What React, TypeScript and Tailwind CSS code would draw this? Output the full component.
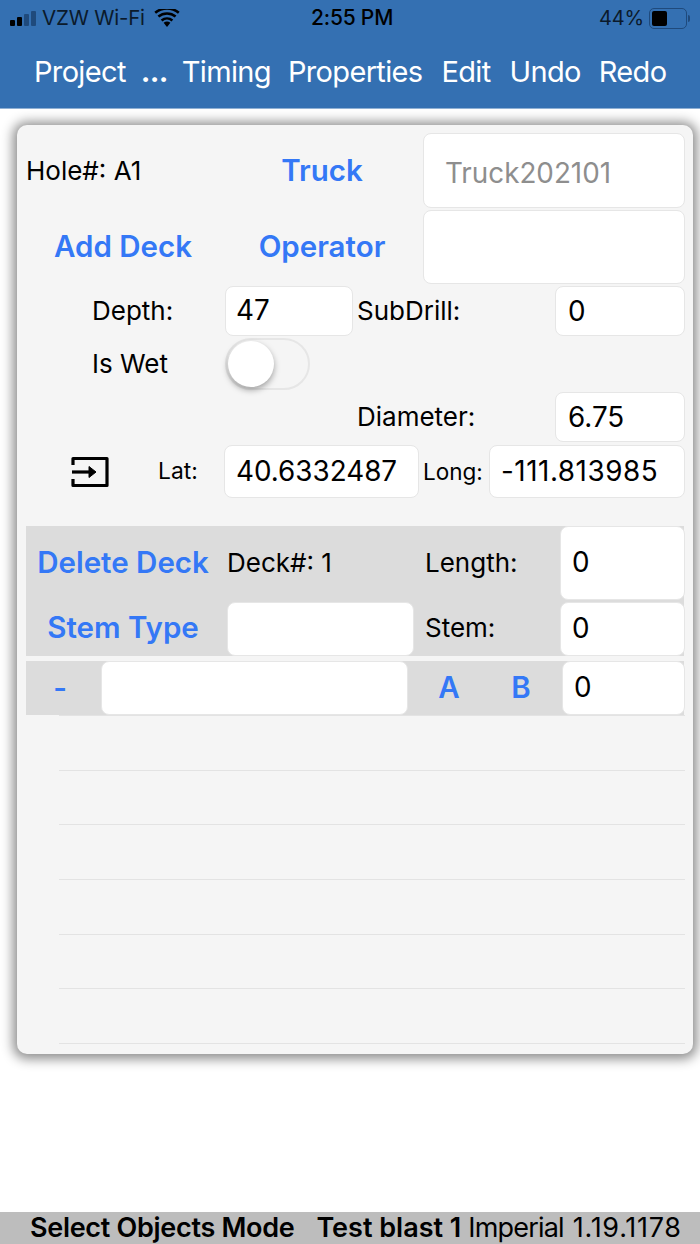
const font = "font-['Inter','Noto_Sans',sans-serif]";

function Field({ value, className, muted }: { value?: string; className: string; muted?: boolean }) {
  return (
    <div
      className={`flex items-center shrink-0 bg-white rounded-[8px] border border-[#e6e6e6] text-[27.8px] ${
        muted ? "text-[#8e8e8e]" : "text-black"
      } ${className}`}
    >
      {value}
    </div>
  );
}

function BlueLabel({ children, className }: { children: string; className: string }) {
  return (
    <div className={`font-semibold text-[#3478f6] text-[29.5px] text-center whitespace-nowrap shrink-0 ${className}`}>
      {children}
    </div>
  );
}

function StatusBar() {
  return (
    <div className="h-[36px] flex items-center text-[20px] tracking-[-0.2px] text-[#0b1a2b] relative">
      <div className="flex items-end gap-[2px] ml-[10px] h-[15px]">
        <span className="w-[5px] h-[6px] rounded-[1px] bg-black" />
        <span className="w-[5px] h-[9px] rounded-[1px] bg-black" />
        <span className="w-[5px] h-[12px] rounded-[1px] bg-[#1f4a7c]" />
        <span className="w-[5px] h-[15px] rounded-[1px] bg-[#1f4a7c]" />
      </div>
      <span className="ml-[6px] text-[20.5px]">VZW Wi-Fi</span>
      <svg width="26" height="19" viewBox="0 0 26 19" className="ml-[9px]">
        <path d="M13 18l-3.4-4.2a5.4 5.4 0 0 1 6.8 0z" fill="#000" />
        <path d="M7.6 11.4a8.6 8.6 0 0 1 10.8 0" stroke="#000" strokeWidth="2.6" fill="none" />
        <path d="M4.4 7.6a13.4 13.4 0 0 1 17.2 0" stroke="#000" strokeWidth="2.6" fill="none" />
        <path d="M1.2 3.8a18.4 18.4 0 0 1 23.6 0" stroke="#000" strokeWidth="2.6" fill="none" />
      </svg>
      <span className="absolute left-[311px] text-[21px] font-medium text-black">2:55 PM</span>
      <span className="ml-auto">44%</span>
      <div className="ml-[5px] mr-[13px] w-[38px] h-[21px] border border-[#1f4a7c] rounded-[5px] p-[2px] relative">
        <div className="w-[15px] h-full bg-black rounded-[2px]" />
        <span className="absolute -right-[4px] top-[6px] w-[2px] h-[7px] bg-[#1f4a7c] rounded-r-[2px]" />
      </div>
    </div>
  );
}

function NavBar() {
  const items: [string, string][] = [
    ["Project", "ml-[34px]"],
    ["...", "ml-[15px] font-bold"],
    ["Timing", "ml-[14px]"],
    ["Properties", "ml-[17px]"],
    ["Edit", "ml-[19px]"],
    ["Undo", "ml-[19px]"],
    ["Redo", "ml-[18px]"],
  ];
  return (
    <div className="h-[72px] flex items-start pt-[18px] text-white text-[29px] leading-[36px] tracking-[-0.66px] whitespace-nowrap">
      {items.map(([t, c]) => (
        <span key={t} className={c}>
          {t}
        </span>
      ))}
    </div>
  );
}

function ListLines() {
  return (
    <div className="ml-[42px] mr-[8px] flex flex-col border-t border-[#e3e3e3]">
      {[0, 1, 2, 3, 4, 5].map((i) => (
        <div key={i} className="h-[54.7px] border-b border-[#e3e3e3]" />
      ))}
    </div>
  );
}

export default function App() {
  return (
    <div className={`w-[700px] h-[1244px] bg-white flex flex-col text-black ${font}`}>
      <div className="bg-[#3470b2] h-[109px] border-b border-[#8fb0d4] shrink-0">
        <StatusBar />
        <NavBar />
      </div>

      <div className="mt-[16px] ml-[17px] w-[676px] h-[929px] shrink-0 bg-[#f5f5f5] rounded-[10px] shadow-[0_1px_12px_4px_rgba(0,0,0,0.45)] pt-[8px] pb-[10px] flex flex-col">
        <div className="h-[75px] flex items-center text-[26px]">
          <span className="ml-[9px] w-[199px] shrink-0 leading-none">Hole#: A1</span>
          <BlueLabel className="w-[194px]">Truck</BlueLabel>
          <Field value="Truck202101" muted className="ml-[4px] w-[262px] h-[75px] pl-[21px] pt-[6px]" />
        </div>
        <div className="h-[74px] mt-[2px] flex items-center">
          <BlueLabel className="ml-[16px] w-[180px] pb-[2px]">Add Deck</BlueLabel>
          <BlueLabel className="ml-[11px] w-[196px] pb-[2px]">Operator</BlueLabel>
          <Field className="ml-[3px] w-[262px] h-[74px]" />
        </div>
        <div className="h-[50px] mt-[2px] flex items-center text-[26px]">
          <span className="ml-[75px] w-[133px] shrink-0 pb-[2px]">Depth:</span>
          <Field value="47" className="w-[128px] h-[50px] pl-[10px]" />
          <span className="ml-[4px] w-[198px] shrink-0 pb-[2px]">SubDrill:</span>
          <Field value="0" className="w-[130px] h-[50px] pl-[12px] pt-[2px]" />
        </div>
        <div className="h-[52px] mt-[2px] flex items-center text-[26px]">
          <span className="ml-[75px] w-[133px] shrink-0 pb-[2px]">Is Wet</span>
          <div className="w-[85px] h-[52px] rounded-full border-[2px] border-[#e6e6e6] relative shrink-0">
            <div className="absolute left-[1px] top-[1px] w-[46px] h-[46px] rounded-full bg-white shadow-[0_3px_6px_rgba(0,0,0,0.35)]" />
          </div>
        </div>
        <div className="h-[50px] mt-[2px] flex items-center text-[26px]">
          <span className="ml-[340px] w-[198px] shrink-0 pb-[2px]">Diameter:</span>
          <Field value="6.75" className="w-[130px] h-[50px] pl-[12px] pt-[2px]" />
        </div>
        <div className="h-[53px] mt-[3px] flex items-center">
          <svg width="38" height="32" viewBox="0 0 38 32" className="ml-[54px] shrink-0" fill="none" stroke="#000" strokeWidth="3.2" strokeLinejoin="round">
            <path d="M2 9V2.5h34v27H2V23" />
            <path d="M1 16h18" />
            <path d="M18 10.5v11l7-5.5z" fill="#000" strokeWidth="1" />
          </svg>
          <span className="ml-[49px] w-[66px] shrink-0 text-[22.8px]">Lat:</span>
          <Field value="40.6332487" className="w-[195px] h-[53px] pl-[11px]" />
          <span className="ml-[4px] w-[66px] shrink-0 text-[22.5px]">Long:</span>
          <Field value="-111.813985" className="w-[196px] h-[53px] pl-[11px] tracking-[0.55px]" />
        </div>

        <div className="mt-[28px] mx-[9px] bg-[#dcdcdc]">
          <div className="h-[76px] flex items-center text-[26px]">
            <BlueLabel className="ml-[11px] w-[172px] pb-[4px]">Delete Deck</BlueLabel>
            <span className="ml-[18px] w-[198px] shrink-0 pb-[4px]">Deck#: 1</span>
            <span className="w-[135px] shrink-0 pb-[4px]">Length:</span>
            <Field value="0" className="w-[125px] h-[74px] pl-[11px] mb-[2px]" />
          </div>
          <div className="h-[54px] flex items-center text-[26px]">
            <BlueLabel className="ml-[21px] w-[152px] pb-[4px]">Stem Type</BlueLabel>
            <Field className="ml-[28px] w-[187px] h-[54px]" />
            <span className="ml-[11px] w-[135px] shrink-0 pb-[4px]">Stem:</span>
            <Field value="0" className="w-[125px] h-[54px] pl-[11px]" />
          </div>
        </div>
        <div className="mt-[5px] mx-[9px] h-[54px] bg-[#dcdcdc] flex items-center">
          <BlueLabel className="ml-[27px] w-[14px] pb-[2px]">-</BlueLabel>
          <Field className="ml-[34px] w-[307px] h-[54px]" />
          <BlueLabel className="ml-[30px] w-[22px] pb-[2px]">A</BlueLabel>
          <BlueLabel className="ml-[50px] w-[22px] pb-[2px]">B</BlueLabel>
          <Field value="0" className="ml-[30px] w-[123px] h-[54px] pl-[11px]" />
        </div>
        <ListLines />
      </div>

      <div className="mt-auto h-[32px] bg-[#bdbdbd] flex items-center text-[27px] tracking-[-0.3px] whitespace-nowrap shrink-0">
        <span className="ml-[30px] font-semibold">Select Objects Mode</span>
        <span className="ml-[22px] font-semibold tracking-normal">Test blast 1</span>
        <span className="ml-[7px] tracking-[-0.8px]">Imperial</span>
        <span className="ml-[9px] tracking-[0.7px]">1.19.1178</span>
      </div>
    </div>
  );
}
